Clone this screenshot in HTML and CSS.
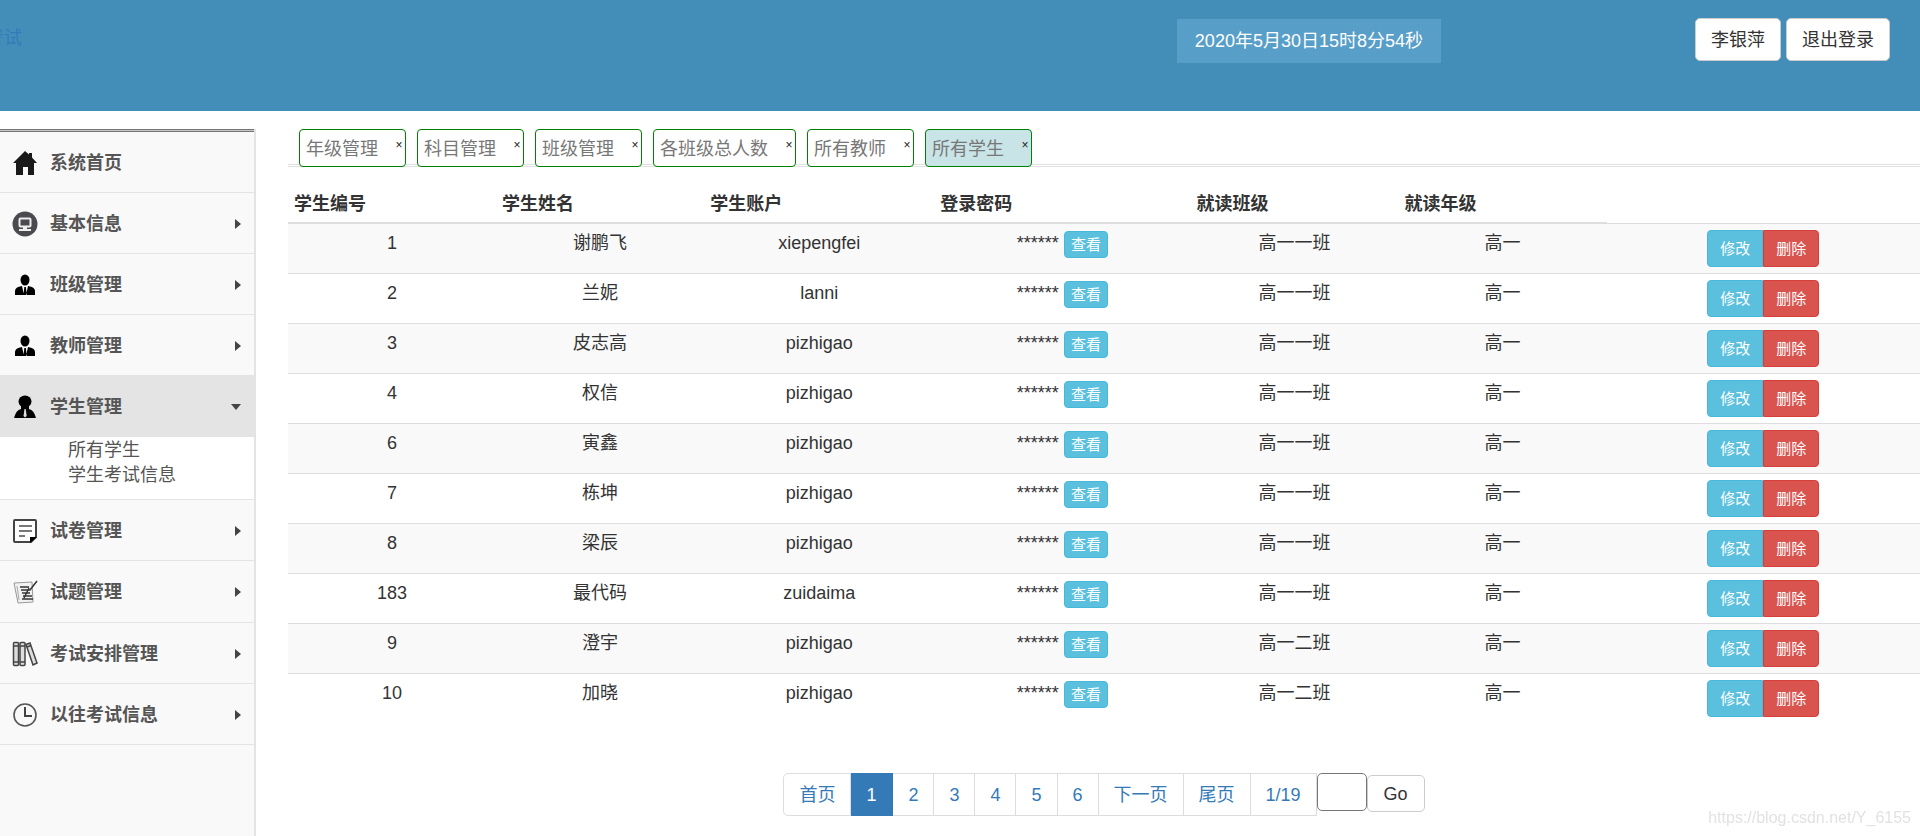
FILE: index.html
```html
<!DOCTYPE html>
<html lang="zh-CN">
<head>
<meta charset="utf-8">
<title>学生管理</title>
<link rel="stylesheet" href="styles.css">
</head>
<body>
<header class="topbar">
  <a class="brand" href="#">考试</a>
  <div class="clock">2020年5月30日15时8分54秒</div>
  <div class="account">
    <button class="btn" type="button">李银萍</button>
    <button class="btn" type="button">退出登录</button>
  </div>
</header>
<div class="layout">
  <nav class="sidebar">
    <ul class="menu">
      <li><a class="item" href="#">
        <svg class="icon" viewBox="0 0 26 26"><path fill="#1a1a1a" d="M13 1 L17 4.500V3h3v4.500L25 13h-3v12h-6v-8h-5v8H4V13H1z"/></svg>系统首页</a></li>
      <li><a class="item" href="#">
        <svg class="icon" viewBox="0 0 26 26"><circle cx="13" cy="13" r="12.500" fill="#4a4a4f"/><rect x="7.500" y="7.500" width="11" height="8" rx="1" fill="none" stroke="#eee" stroke-width="2"/><path fill="#eee" d="M11 16h4v2h4v2H7v-2h4z"/></svg>基本信息<span class="arrow"></span></a></li>
      <li><a class="item" href="#">
        <svg class="icon" viewBox="0 0 26 26"><ellipse cx="13" cy="8" rx="4.500" ry="5.500"/><path d="M3 23v-4q0-4 7-5l2 9zM23 23v-4q0-4-7-5l-2 9zM12.300 15h1.600l.8 8h-3.200z"/></svg>班级管理<span class="arrow"></span></a></li>
      <li><a class="item" href="#">
        <svg class="icon" viewBox="0 0 26 26"><ellipse cx="13" cy="8" rx="4.500" ry="5.500"/><path d="M3 23v-4q0-4 7-5l2 9zM23 23v-4q0-4-7-5l-2 9zM12.300 15h1.600l.8 8h-3.200z"/></svg>教师管理<span class="arrow"></span></a></li>
      <li><a class="item item-open" href="#">
        <svg class="icon" viewBox="0 0 26 26"><ellipse cx="13" cy="7.500" rx="6.500" ry="6"/><path d="M9 12h8v3q5 1 7 9H2q2-8 7-9z"/><path fill="#ddd" d="M12.500 15h1.200l1 7-1.700 1.500-1.500-1.500z"/></svg>学生管理<span class="arrow arrow-down"></span></a>
        <ul class="submenu">
          <li><a href="#">所有学生</a></li>
          <li><a href="#">学生考试信息</a></li>
        </ul></li>
      <li><a class="item" href="#">
        <svg class="icon" viewBox="0 0 26 26"><path fill="#fff" stroke="#444" stroke-width="2" d="M3 2h20q1 0 1 1v16l-5 5H3q-1 0-1-1V3q0-1 1-1z"/><path stroke="#777" stroke-width="2" d="M7 8h13M7 13h13M7 18h6"/><path d="M18 25v-6h7z"/></svg>试卷管理<span class="arrow"></span></a></li>
      <li><a class="item item-tall" href="#">
        <svg class="icon" viewBox="0 0 26 26"><path fill="#f1f1f1" stroke="#999" d="M2 4l18-1 1 20-15 1z"/><path stroke="#333" stroke-width="1.500" fill="none" d="M8 8h9M9 11h9l7-9M10 14h8M11 17h9M10 20h11M17 9l-5 10"/><path stroke="#aaa" d="M5 7l2 14"/></svg>试题管理<span class="arrow"></span></a></li>
      <li><a class="item" href="#">
        <svg class="icon" viewBox="0 0 26 26"><g fill="#ddd" stroke="#444" stroke-width="1.500"><rect x="1.500" y="1.500" width="5" height="23" rx="1"/><rect x="8" y="1.500" width="5" height="23" rx="1"/><path d="M14 3.500l4-1.500 7 20-4 2z"/></g><path stroke="#444" stroke-width="1.500" d="M2 5h5M8 5h5M15 6l4-1.500M2 21h5M8 21h5"/></svg>考试安排管理<span class="arrow"></span></a></li>
      <li><a class="item" href="#">
        <svg class="icon" viewBox="0 0 26 26"><circle cx="13" cy="13" r="11" fill="none" stroke="#555" stroke-width="1.600"/><path fill="none" stroke="#444" stroke-width="2" d="M13 5v9h7"/></svg>以往考试信息<span class="arrow"></span></a></li>
    </ul>
  </nav>
  <main class="main">
    <ul class="tabs">
      <li class="tab"><a href="#">年级管理</a><button type="button" aria-label="关闭">×</button></li>
      <li class="tab"><a href="#">科目管理</a><button type="button" aria-label="关闭">×</button></li>
      <li class="tab"><a href="#">班级管理</a><button type="button" aria-label="关闭">×</button></li>
      <li class="tab"><a href="#">各班级总人数</a><button type="button" aria-label="关闭">×</button></li>
      <li class="tab"><a href="#">所有教师</a><button type="button" aria-label="关闭">×</button></li>
      <li class="tab tab-active"><a href="#">所有学生</a><button type="button" aria-label="关闭">×</button></li>
    </ul>
    <table class="grid">
      <colgroup><col class="c-std"><col class="c-std"><col class="c-account"><col class="c-pass"><col class="c-std"><col class="c-std"><col></colgroup>
      <thead><tr><th>学生编号</th><th>学生姓名</th><th>学生账户</th><th>登录密码</th><th>就读班级</th><th>就读年级</th></tr></thead>
      <tbody>
        <tr><td>1</td><td>谢鹏飞</td><td>xiepengfei</td><td><div class="pass">******<button class="view" type="button">查看</button></div></td><td>高一一班</td><td>高一</td><td><div class="ops"><button class="edit" type="button">修改</button><button class="del" type="button">删除</button></div></td></tr>
        <tr><td>2</td><td>兰妮</td><td>lanni</td><td><div class="pass">******<button class="view" type="button">查看</button></div></td><td>高一一班</td><td>高一</td><td><div class="ops"><button class="edit" type="button">修改</button><button class="del" type="button">删除</button></div></td></tr>
        <tr><td>3</td><td>皮志高</td><td>pizhigao</td><td><div class="pass">******<button class="view" type="button">查看</button></div></td><td>高一一班</td><td>高一</td><td><div class="ops"><button class="edit" type="button">修改</button><button class="del" type="button">删除</button></div></td></tr>
        <tr><td>4</td><td>权信</td><td>pizhigao</td><td><div class="pass">******<button class="view" type="button">查看</button></div></td><td>高一一班</td><td>高一</td><td><div class="ops"><button class="edit" type="button">修改</button><button class="del" type="button">删除</button></div></td></tr>
        <tr><td>6</td><td>寅鑫</td><td>pizhigao</td><td><div class="pass">******<button class="view" type="button">查看</button></div></td><td>高一一班</td><td>高一</td><td><div class="ops"><button class="edit" type="button">修改</button><button class="del" type="button">删除</button></div></td></tr>
        <tr><td>7</td><td>栋坤</td><td>pizhigao</td><td><div class="pass">******<button class="view" type="button">查看</button></div></td><td>高一一班</td><td>高一</td><td><div class="ops"><button class="edit" type="button">修改</button><button class="del" type="button">删除</button></div></td></tr>
        <tr><td>8</td><td>梁辰</td><td>pizhigao</td><td><div class="pass">******<button class="view" type="button">查看</button></div></td><td>高一一班</td><td>高一</td><td><div class="ops"><button class="edit" type="button">修改</button><button class="del" type="button">删除</button></div></td></tr>
        <tr><td>183</td><td>最代码</td><td>zuidaima</td><td><div class="pass">******<button class="view" type="button">查看</button></div></td><td>高一一班</td><td>高一</td><td><div class="ops"><button class="edit" type="button">修改</button><button class="del" type="button">删除</button></div></td></tr>
        <tr><td>9</td><td>澄宇</td><td>pizhigao</td><td><div class="pass">******<button class="view" type="button">查看</button></div></td><td>高一二班</td><td>高一</td><td><div class="ops"><button class="edit" type="button">修改</button><button class="del" type="button">删除</button></div></td></tr>
        <tr><td>10</td><td>加晓</td><td>pizhigao</td><td><div class="pass">******<button class="view" type="button">查看</button></div></td><td>高一二班</td><td>高一</td><td><div class="ops"><button class="edit" type="button">修改</button><button class="del" type="button">删除</button></div></td></tr>
      </tbody>
    </table>
    <form class="pager">
      <ul class="pages">
        <li><a href="#">首页</a></li>
        <li><a class="current" href="#">1</a></li>
        <li><a href="#">2</a></li>
        <li><a href="#">3</a></li>
        <li><a href="#">4</a></li>
        <li><a href="#">5</a></li>
        <li><a href="#">6</a></li>
        <li><a href="#">下一页</a></li>
        <li><a href="#">尾页</a></li>
        <li><a href="#">1/19</a></li>
      </ul>
      <input class="page-no" type="text" aria-label="页码">
      <button class="go" type="button">Go</button>
    </form>
  </main>
</div>
<div class="watermark">https://blog.csdn.net/Y_6155</div>
</body>
</html>
```
FILE: styles.css
```css
* { box-sizing: border-box; }

body {
  margin: 0;
  min-height: 100vh;
  display: flex;
  flex-direction: column;
  background: #fff;
  color: #333;
  font: 18px/26px "Liberation Sans", "Noto Sans CJK SC", sans-serif;
}

ul { list-style: none; margin: 0; padding: 0; }
a { color: inherit; text-decoration: none; }
button, input { font: inherit; color: inherit; margin: 0; }

/* header */
.topbar {
  display: flex;
  align-items: flex-start;
  height: 111px;
  padding: 18px 30px 0 0;
  overflow: hidden;
  background: #438eb9;
}
.brand { margin: 7px auto 0 -14px; color: #337ab7; }
.clock {
  margin: 1px 254px 0 0;
  padding: 9px 18px;
  background: #579ec8;
  color: #fff;
}
.account { display: flex; gap: 5px; }
.btn {
  height: 43px;
  padding: 0 15px;
  background: #fff;
  border: 1px solid #ccc;
  border-radius: 5px;
}

/* columns */
.layout { flex: 1; display: flex; padding-top: 18px; }

.sidebar {
  flex: none;
  width: 256px;
  background: #f9f9f9;
  border-right: 2px solid #e4e4e4;
}
.menu { border-top: 3px double #777; background: #c4c4c4; }
.menu > li { border-bottom: 1px solid #e4e4e4; background: #f9f9f9; }
.item {
  display: flex;
  align-items: center;
  gap: 12px;
  height: 60px;
  padding: 1px 13px 0 12px;
  color: #555;
  font-weight: bold;
}
.item-tall { height: 61px; }
.item-open { height: 61px; margin-right: -2px; padding-right: 15px; background: #e4e4e4; }
.icon { flex: none; width: 26px; height: 26px; }
.arrow {
  margin-left: auto;
  border-left: 6px solid #444;
  border-top: 5px solid transparent;
  border-bottom: 5px solid transparent;
}
.arrow-down {
  border-top: 6px solid #444;
  border-left: 5px solid transparent;
  border-right: 5px solid transparent;
  border-bottom: 0;
}
.submenu {
  padding: 1px 0 11px 68px;
  background: #fff;
  color: #555;
  line-height: 25px;
}

/* tabs */
.main { flex: 1; min-width: 0; padding-left: 32px; }
.tabs {
  display: flex;
  gap: 11px;
  padding-left: 11px;
  border-bottom: 3px double #e0e0e0;
}
.tab {
  display: flex;
  align-items: flex-start;
  height: 38px;
  margin-bottom: -3px;
  padding: 6px 2px 0 6px;
  background: #fff;
  border: 1px solid #008000;
  border-radius: 4px;
  color: #777;
}
.tab-active { background: #c9e4e7; }
.tab button {
  width: 8px;
  margin-left: 17px;
  padding: 0;
  border: 0;
  background: none;
  color: #222;
  font-size: 12px;
  line-height: 18px;
}

/* table */
.grid {
  width: 100%;
  margin-top: 17px;
  table-layout: fixed;
  border-collapse: collapse;
}
.c-std { width: 12.75%; }
.c-account { width: 14.1%; }
.c-pass { width: 15.7%; }
.grid th { padding: 7px 6px 5px; text-align: left; border-bottom: 2px solid #ddd; }
.grid td { padding: 6px; text-align: center; vertical-align: top; border-top: 1px solid #ddd; }
.grid tbody tr:nth-child(odd) { background: #f9f9f9; }
.pass { display: flex; justify-content: center; align-items: flex-start; gap: 5px; }
.view, .edit, .del {
  color: #fff;
  font-size: 15px;
  line-height: 25px;
  border: 1px solid #46b8da;
  background: #5bc0de;
}
.view { height: 27px; margin-top: 1px; padding: 0 6px; border-radius: 4px; }
.ops { display: flex; justify-content: center; }
.edit, .del { height: 37px; padding: 0 12px; }
.edit { border-radius: 4px 0 0 4px; }
.del { border-color: #d43f3a; border-radius: 0 4px 4px 0; background: #d9534f; }

/* pagination */
.pager { display: flex; justify-content: center; align-items: flex-start; margin-top: 50px; }
.pages { display: flex; color: #337ab7; }
.pages a {
  display: block;
  padding: 8px 15px 7px;
  border: 1px solid #ddd;
  border-left-width: 0;
}
.pages li:first-child a { border-left-width: 1px; border-radius: 5px 0 0 5px; }
.pages .current { padding: 8px 16px 7px 15px; background: #337ab7; border-color: #337ab7; color: #fff; }
.page-no { width: 50px; height: 38px; border: 1px solid #777; border-radius: 5px; }
.go {
  height: 37px;
  margin-top: 2px;
  padding: 2px 16px 0;
  background: #fff;
  border: 1px solid #ccc;
  border-radius: 5px;
}

.watermark {
  position: fixed;
  right: 9px;
  bottom: 6px;
  color: #e2e2e2;
  font-size: 16px;
  line-height: 24px;
}
```
